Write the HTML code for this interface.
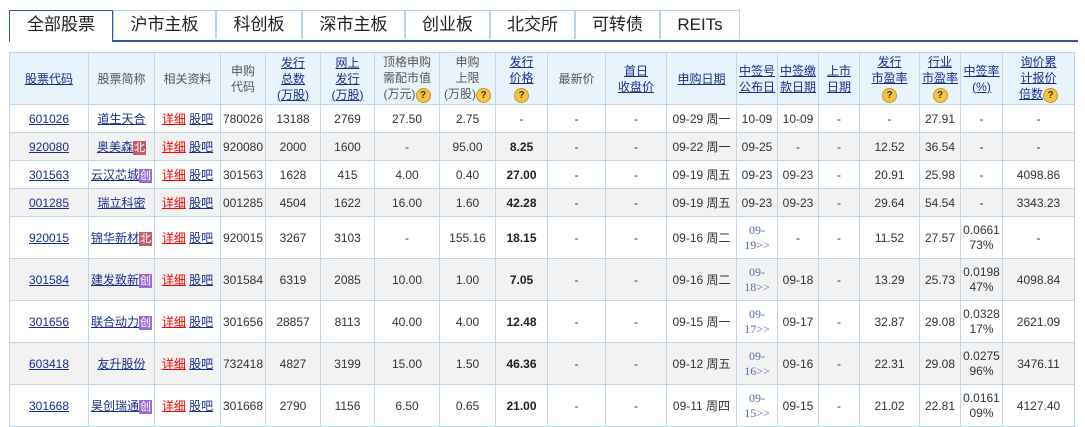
<!DOCTYPE html>
<html><head><meta charset="utf-8"><style>
body{margin:0;background:#fff;font-family:"Liberation Sans","Noto Sans CJK SC",sans-serif;width:1085px;height:427px;overflow:hidden;position:relative}
.tabs{position:absolute;left:9px;top:10px;height:30px}
.tab{position:absolute;top:0;height:29px;border:1px solid #bcd3e8;border-bottom:none;font-size:17px;line-height:28px;text-align:center;color:#222;box-sizing:border-box;background:#fff}
.tab.act{border:1px solid #2f5a9c;border-bottom:none;height:32px;z-index:2}
.line{position:absolute;left:9px;top:40px;width:1069px;height:2px;background:#2f5a9c}
table{position:absolute;left:9px;top:52px;border-collapse:collapse;table-layout:fixed;width:1065px;font-size:12px;color:#333}
td,th{border:1px solid #c2d6ea;text-align:center;padding:0;font-weight:normal;overflow:hidden;white-space:nowrap}
th{background:#e9f3fc;height:51px;line-height:16px;color:#555;font-size:12px;white-space:normal}
th a,td a{color:#1a2e8f;text-decoration:underline}
tr.s td{height:27px}
tr.t td{height:41px}
tr.g td{background:#f2f2f2}
.r{color:#f00!important}
b{color:#222}
.q{display:inline-block;width:13px;height:13px;border-radius:50%;background:#f5c542;border:1px solid #c9961a;color:#333;font-size:10px;line-height:13px;font-weight:bold;vertical-align:middle;text-align:center}
.bd{display:inline-block;color:#fff;font-size:11px;line-height:14px;padding:0 1px;vertical-align:middle}
.bei{background:#c45a6a}.chu{background:#9b6bd6}
.sm{color:#5a6aa8;font-family:"Liberation Serif",serif;font-size:12px;line-height:15px;white-space:normal}
.w{white-space:normal;line-height:15px}
</style></head><body>
<div class="tabs">
<div class="tab act" style="left:0;width:104px">全部股票</div>
<div class="tab" style="left:104px;width:103px">沪市主板</div>
<div class="tab" style="left:207px;width:86px">科创板</div>
<div class="tab" style="left:293px;width:103px">深市主板</div>
<div class="tab" style="left:396px;width:85px">创业板</div>
<div class="tab" style="left:481px;width:85px">北交所</div>
<div class="tab" style="left:566px;width:85px">可转债</div>
<div class="tab" style="left:651px;width:80px">REITs</div>
</div>
<div class="line"></div>
<table>
<colgroup><col style="width:79px"><col style="width:66px"><col style="width:66px"><col style="width:45px"><col style="width:55px"><col style="width:54px"><col style="width:65px"><col style="width:56px"><col style="width:52px"><col style="width:58px"><col style="width:61px"><col style="width:70px"><col style="width:41px"><col style="width:41px"><col style="width:41px"><col style="width:60px"><col style="width:41px"><col style="width:42px"><col style="width:72px"></colgroup>
<tr><th><a>股票代码</a></th><th>股票简称</th><th>相关资料</th><th>申购<br>代码</th><th><a>发行<br>总数<br>(万股)</a></th><th><a>网上<br>发行<br>(万股)</a></th><th>顶格申购<br>需配市值<br>(万元)<span class="q">?</span></th><th>申购<br>上限<br>(万股)<span class="q">?</span></th><th><a>发行<br>价格</a><br><span class="q">?</span></th><th>最新价</th><th><a>首日<br>收盘价</a></th><th><a>申购日期</a></th><th><a>中签号<br>公布日</a></th><th><a>中签缴<br>款日期</a></th><th><a>上市<br>日期</a></th><th><a>发行<br>市盈率</a><br><span class="q">?</span></th><th><a>行业<br>市盈率</a><br><span class="q">?</span></th><th><a>中签率<br>(%)</a></th><th><a>询价累<br>计报价<br>倍数</a><span class="q">?</span></th></tr>
<tr class="s"><td><a>601026</a></td><td><a>道生天合</a></td><td><a class="r">详细</a> <a>股吧</a></td><td>780026</td><td>13188</td><td>2769</td><td>27.50</td><td>2.75</td><td>-</td><td>-</td><td>-</td><td>09-29 周一</td><td>10-09</td><td>10-09</td><td>-</td><td>-</td><td>27.91</td><td>-</td><td>-</td></tr>
<tr class="s g"><td><a>920080</a></td><td><a>奥美森</a><span class="bd bei">北</span></td><td><a class="r">详细</a> <a>股吧</a></td><td>920080</td><td>2000</td><td>1600</td><td>-</td><td>95.00</td><td><b>8.25</b></td><td>-</td><td>-</td><td>09-22 周一</td><td>09-25</td><td>-</td><td>-</td><td>12.52</td><td>36.54</td><td>-</td><td>-</td></tr>
<tr class="s"><td><a>301563</a></td><td><a>云汉芯城</a><span class="bd chu">创</span></td><td><a class="r">详细</a> <a>股吧</a></td><td>301563</td><td>1628</td><td>415</td><td>4.00</td><td>0.40</td><td><b>27.00</b></td><td>-</td><td>-</td><td>09-19 周五</td><td>09-23</td><td>09-23</td><td>-</td><td>20.91</td><td>25.98</td><td>-</td><td>4098.86</td></tr>
<tr class="s g"><td><a>001285</a></td><td><a>瑞立科密</a></td><td><a class="r">详细</a> <a>股吧</a></td><td>001285</td><td>4504</td><td>1622</td><td>16.00</td><td>1.60</td><td><b>42.28</b></td><td>-</td><td>-</td><td>09-19 周五</td><td>09-23</td><td>09-23</td><td>-</td><td>29.64</td><td>54.54</td><td>-</td><td>3343.23</td></tr>
<tr class="t"><td><a>920015</a></td><td><a>锦华新材</a><span class="bd bei">北</span></td><td><a class="r">详细</a> <a>股吧</a></td><td>920015</td><td>3267</td><td>3103</td><td>-</td><td>155.16</td><td><b>18.15</b></td><td>-</td><td>-</td><td>09-16 周二</td><td class="sm">09-<br>19&gt;&gt;</td><td>-</td><td>-</td><td>11.52</td><td>27.57</td><td class="w">0.0661<br>73%</td><td>-</td></tr>
<tr class="t g"><td><a>301584</a></td><td><a>建发致新</a><span class="bd chu">创</span></td><td><a class="r">详细</a> <a>股吧</a></td><td>301584</td><td>6319</td><td>2085</td><td>10.00</td><td>1.00</td><td><b>7.05</b></td><td>-</td><td>-</td><td>09-16 周二</td><td class="sm">09-<br>18&gt;&gt;</td><td>09-18</td><td>-</td><td>13.29</td><td>25.73</td><td class="w">0.0198<br>47%</td><td>4098.84</td></tr>
<tr class="t"><td><a>301656</a></td><td><a>联合动力</a><span class="bd chu">创</span></td><td><a class="r">详细</a> <a>股吧</a></td><td>301656</td><td>28857</td><td>8113</td><td>40.00</td><td>4.00</td><td><b>12.48</b></td><td>-</td><td>-</td><td>09-15 周一</td><td class="sm">09-<br>17&gt;&gt;</td><td>09-17</td><td>-</td><td>32.87</td><td>29.08</td><td class="w">0.0328<br>17%</td><td>2621.09</td></tr>
<tr class="t g"><td><a>603418</a></td><td><a>友升股份</a></td><td><a class="r">详细</a> <a>股吧</a></td><td>732418</td><td>4827</td><td>3199</td><td>15.00</td><td>1.50</td><td><b>46.36</b></td><td>-</td><td>-</td><td>09-12 周五</td><td class="sm">09-<br>16&gt;&gt;</td><td>09-16</td><td>-</td><td>22.31</td><td>29.08</td><td class="w">0.0275<br>96%</td><td>3476.11</td></tr>
<tr class="t"><td><a>301668</a></td><td><a>昊创瑞通</a><span class="bd chu">创</span></td><td><a class="r">详细</a> <a>股吧</a></td><td>301668</td><td>2790</td><td>1156</td><td>6.50</td><td>0.65</td><td><b>21.00</b></td><td>-</td><td>-</td><td>09-11 周四</td><td class="sm">09-<br>15&gt;&gt;</td><td>09-15</td><td>-</td><td>21.02</td><td>22.81</td><td class="w">0.0161<br>09%</td><td>4127.40</td></tr>
</table>
</body></html>
